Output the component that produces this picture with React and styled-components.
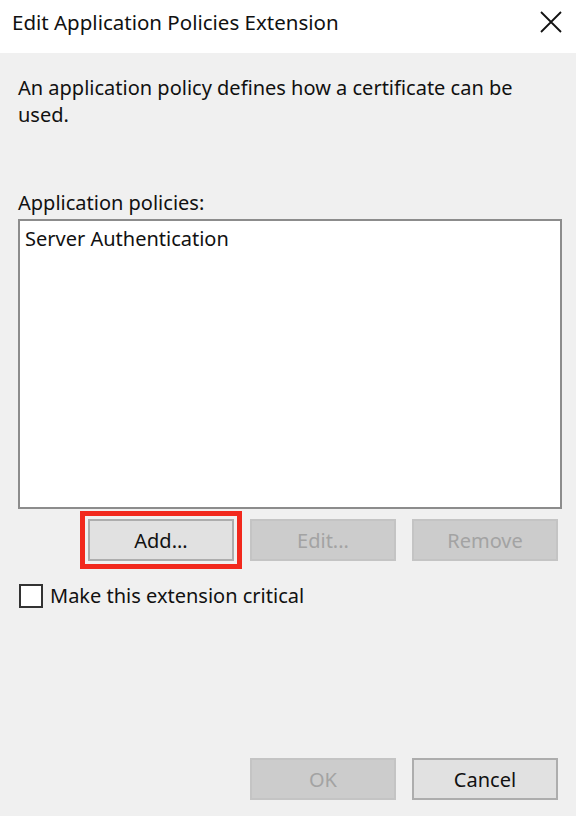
import React from 'react'
import styled, { createGlobalStyle } from 'styled-components'

const GlobalStyle = createGlobalStyle`
  html, body {
    margin: 0;
    padding: 0;
    background: #f0f0f0;
  }
  body {
    font-family: 'Noto Sans', 'Open Sans', sans-serif;
    color: #111;
  }
`

export default function App() {
  return (
    <>
      <GlobalStyle />
      <Window>
        <TitleBar>
          <Title>Edit Application Policies Extension</Title>
          <Close aria-label="Close">
            <svg width="22" height="22" viewBox="0 0 22 22">
              <path d="M1 1 L21 21 M21 1 L1 21" stroke="#111" strokeWidth="1.8" />
            </svg>
          </Close>
        </TitleBar>
        <Body>
          <Text>An application policy defines how a certificate can be used.</Text>
          <Label>Application policies:</Label>
          <ListBox>
            <ListItem>Server Authentication</ListItem>
          </ListBox>
          <ButtonRow>
            <Button $highlight>Add...</Button>
            <Button disabled>Edit...</Button>
            <Button disabled>Remove</Button>
          </ButtonRow>
          <CheckRow>
            <CheckBox />
            <span>Make this extension critical</span>
          </CheckRow>
          <Spacer />
          <ButtonRow $footer>
            <Button disabled>OK</Button>
            <Button>Cancel</Button>
          </ButtonRow>
        </Body>
      </Window>
    </>
  )
}

// --- STYLES
const Window = styled.div`
  width: 576px;
  height: 816px;
  display: flex;
  flex-direction: column;
  background: #f0f0f0;
  overflow: hidden;
`

const TitleBar = styled.div`
  height: 53px;
  flex-shrink: 0;
  background: #fff;
  display: flex;
  align-items: center;
  justify-content: space-between;
  padding: 0 14px 0 12px;
  box-sizing: border-box;
`

const Title = styled.div`
  font-size: 20.5px;
  color: #111;
  margin-top: -10px;
`

const Close = styled.div`
  display: flex;
  margin-top: -10px;
`

const Body = styled.div`
  flex: 1;
  display: flex;
  flex-direction: column;
  padding: 21px 18px 16px 18px;
  font-size: 20px;
  line-height: 27px;
`

const Text = styled.div`
  padding-right: 6px;
`

const Label = styled.div`
  margin-top: 61px;
`

const ListBox = styled.div`
  margin: 3px -4px 0 0;
  height: 290px;
  box-sizing: border-box;
  background: #fff;
  border: 2px solid #8c8c8c;
  padding: 4px 5px;
`

const ListItem = styled.div``

const ButtonRow = styled.div`
  display: flex;
  justify-content: flex-end;
  gap: 16px;
  margin-top: ${p => (p.$footer ? '0' : '10px')};
`

const Button = styled.button`
  width: 146px;
  height: 42px;
  box-sizing: border-box;
  font-family: inherit;
  font-size: 20px;
  color: #111;
  background: #e1e1e1;
  border: 2px solid #adadad;
  border-radius: 0;
  padding: 0;
  outline: ${p => (p.$highlight ? '5px solid #f2281c' : 'none')};
  outline-offset: 3px;

  &:disabled {
    color: #a3a3a3;
    background: #cccccc;
    border-color: #c4c4c4;
  }
`

const CheckRow = styled.label`
  display: flex;
  align-items: center;
  gap: 7px;
  margin-top: 21px;
  padding-left: 1px;
`

const CheckBox = styled.span`
  width: 24px;
  height: 24px;
  box-sizing: border-box;
  border: 2px solid #333;
  background: #fff;
`

const Spacer = styled.div`
  flex: 1;
`
